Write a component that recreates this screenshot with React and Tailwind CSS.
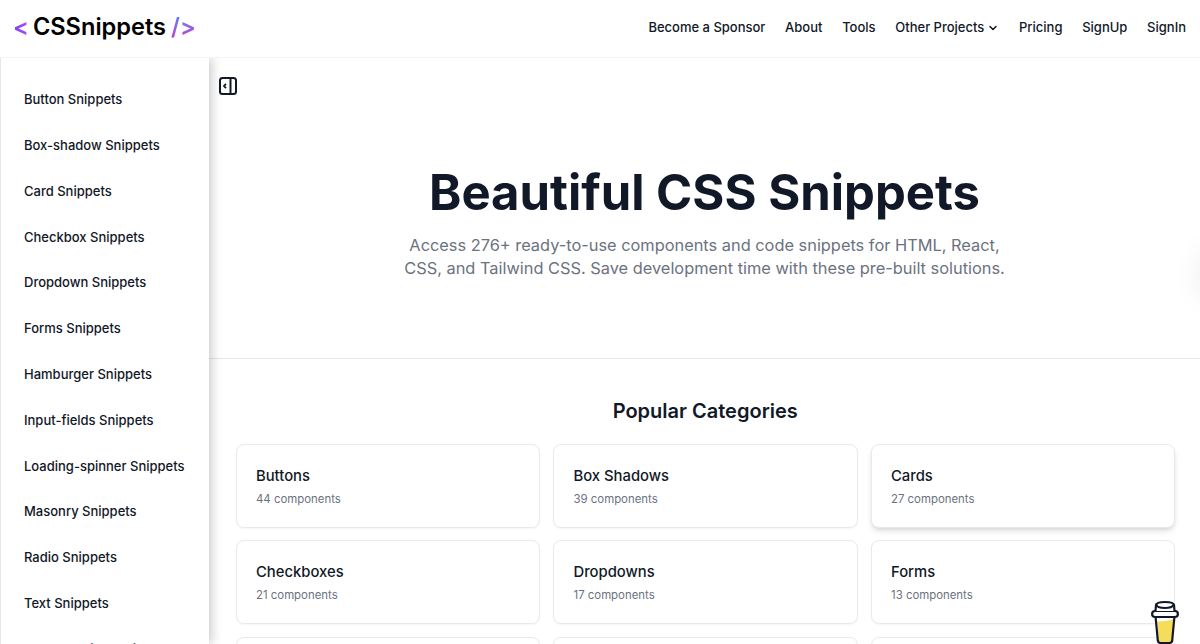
import React from "react";
import { ChevronDown } from "lucide-react";

const NAV = ["Become a Sponsor", "About", "Tools", "Other Projects", "Pricing", "SignUp", "SignIn"];

const SIDEBAR = [
  "Button Snippets",
  "Box-shadow Snippets",
  "Card Snippets",
  "Checkbox Snippets",
  "Dropdown Snippets",
  "Forms Snippets",
  "Hamburger Snippets",
  "Input-fields Snippets",
  "Loading-spinner Snippets",
  "Masonry Snippets",
  "Radio Snippets",
  "Text Snippets",
  "Toggle-switch Snippets",
];

const CATEGORIES = [
  { name: "Buttons", count: 44 },
  { name: "Box Shadows", count: 39 },
  { name: "Cards", count: 27, hovered: true },
  { name: "Checkboxes", count: 21 },
  { name: "Dropdowns", count: 17 },
  { name: "Forms", count: 13 },
  { name: "Hamburgers", count: 12 },
  { name: "Input Fields", count: 11 },
  { name: "Loaders", count: 10 },
];

function Logo() {
  return (
    <div className="flex items-center pb-[3px] text-[23.6px] font-semibold leading-none text-black">
      <span className="bg-gradient-to-r from-[#7c3aed] to-[#a855f7] bg-clip-text text-transparent">&lt;</span>
      <span className="ml-[4px]">CSSnippets</span>
      <span className="ml-[5px] bg-gradient-to-b from-[#3b82f6] to-[#c026d3] bg-clip-text text-transparent">/&gt;</span>
    </div>
  );
}

function CoffeeCup() {
  return (
    <svg className="block" width="30" height="44" viewBox="0 0 30 44" fill="none">
      <path d="M7.5 21.5 Q15 21.5 23.5 19.5 L21.6 40 Q21.4 42 19.5 42 H10.5 Q8.6 42 8.4 40 Z" fill="#f5dc5a" />
      <path d="M5.5 16 L7.8 40.5 Q8.1 43 10.6 43 H19.4 Q21.9 43 22.2 40.5 L24.5 16" stroke="#111827" strokeWidth="2.2" strokeLinejoin="round" />
      <rect x="2.1" y="11" width="25.8" height="6" rx="3" fill="#fff" stroke="#111827" strokeWidth="2.2" />
      <path d="M5.5 11 L6 5 Q6.5 2 15 2 Q23.5 2 24 5 L24.5 11" fill="#fff" stroke="#111827" strokeWidth="2.2" strokeLinejoin="round" />
      <path d="M6.2 4.5 Q7 8 15 8 Q22 8 23.5 5" stroke="#111827" strokeWidth="2" strokeLinecap="round" />
    </svg>
  );
}

function CategoryCard({ name, count, hovered }) {
  return (
    <div
      className={`h-[83.5px] rounded-lg border border-[#e8eaee] bg-white pl-[19.5px] pt-[21px] ${
        hovered ? "shadow-[0_4px_6px_-1px_rgba(0,0,0,0.12),0_2px_4px_-2px_rgba(0,0,0,0.1)]" : "shadow-[0_1px_2px_rgba(0,0,0,0.04)]"
      }`}
    >
      <div className="text-[14.8px] font-medium leading-[21px] text-[#111827]">{name}</div>
      <div className="mt-[3px] text-[11.4px] leading-[18px] text-[#6b7280]">{count} components</div>
    </div>
  );
}

export default function App() {
  return (
    <div className="relative h-[644px] overflow-hidden bg-white font-['Inter',sans-serif]">
      <header className="relative z-20 flex h-[58px] items-center justify-between border-b border-[#f3f4f6] bg-white pl-[13px] pr-[14px]">
        <Logo />
        <nav className="flex items-center gap-[19.7px] pb-[2px] text-[13px] font-medium text-[#111827]">
          {NAV.map((item) => (
            <span key={item} className="flex items-center gap-[3px]">
              {item}
              {item === "Other Projects" && <ChevronDown size={12} strokeWidth={3} />}
            </span>
          ))}
        </nav>
      </header>

      <div className="flex">
        <aside className="relative z-10 h-[586px] w-[209px] shrink-0 overflow-hidden border-l border-[#e5e7eb] bg-white pl-[23px] pt-[19px] shadow-[3px_0_10px_rgba(0,0,0,0.2)]">
          {SIDEBAR.map((item) => (
            <div key={item} className="flex h-[45.8px] items-center whitespace-nowrap text-[13px] font-medium text-[#111827]">
              {item}
            </div>
          ))}
        </aside>

        <main className="min-w-0 flex-1">
          <div className="h-[301px] border-b border-[#e5e7eb] pt-[19px]">
            <svg className="ml-[10px] text-[#111827]" width="18" height="18" viewBox="0 0 18 18" fill="none" stroke="currentColor" strokeWidth="2">
              <rect x="1" y="1" width="16" height="16" rx="2.5" />
              <path d="M11.5 1V17" />
              <path d="M7 6.8 L5 9 L7 11.2" strokeWidth="1.8" />
            </svg>
            <div className="flex flex-col items-center pt-[68px]">
              <h1 className="text-[49px] font-bold leading-[60px] text-[#111827]">Beautiful CSS Snippets</h1>
              <p className="mt-[11px] text-center text-[16.38px] leading-[23px] text-[#6b7280]">
                Access 276+ ready-to-use components and code snippets for HTML, React,
                <br />
                CSS, and Tailwind CSS. Save development time with these pre-built solutions.
              </p>
            </div>
          </div>

          <section className="pl-[26.5px] pr-[25px] pt-[38px]">
            <h2 className="text-center text-[20px] font-semibold leading-[28px] text-[#111827]">Popular Categories</h2>
            <div className="mt-[19px] grid grid-cols-3 gap-x-[13px] gap-y-[12.8px]">
              {CATEGORIES.map((cat) => (
                <CategoryCard key={cat.name} {...cat} />
              ))}
            </div>
          </section>
        </main>
      </div>

      {/* faint shadow of the tab that sits off the right edge */}
      <div className="absolute right-[-40px] top-[250px] h-[50px] w-[40px] rounded-full shadow-[0_0_30px_rgba(0,0,0,0.08)]" />

      <div className="absolute bottom-0 right-[20px] z-20">
        <CoffeeCup />
      </div>
    </div>
  );
}
